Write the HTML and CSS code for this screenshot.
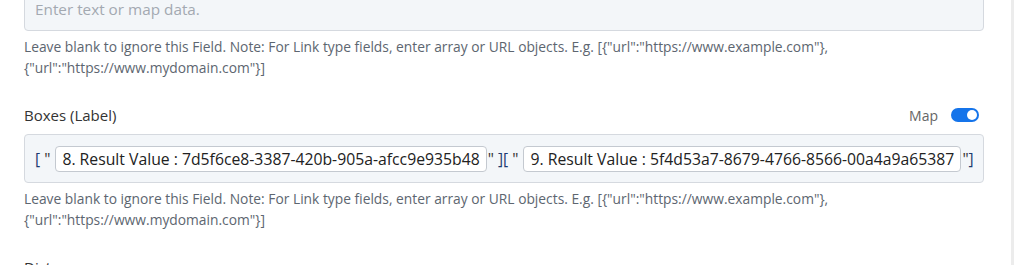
FILE: index.html
```html
<html>
<head>
    <meta charset="UTF-8">
    <title>Boxes</title>
    <link rel="stylesheet" href="styles.css">
</head>
<body>
    <div class="pantalla">
        <div id="formulario">
            <div class="campo">
                <div class="caja vacia">Enter text or map data.</div>
                <p class="ayuda">Leave blank to ignore this Field. Note: For Link type fields, enter array or URL objects. E.g. [{"url":"https://www.example.com"},<br>{"url":"https://www.mydomain.com"}]</p>
            </div>

            <div class="campo">
                <div class="cabecera">
                    <label class="etiqueta">Boxes (Label)</label>
                    <div class="mapa">
                        <span>Map</span>
                        <span class="interruptor"><span class="bola"></span></span>
                    </div>
                </div>
                <div class="caja fichas">
                    <span class="corchete">[</span><span class="comilla">&nbsp;"</span>
                    <span class="ficha">8. Result Value : 7d5f6ce8-3387-420b-905a-afcc9e935b48</span>
                    <span class="comilla">"&nbsp;</span><span class="corchete">][</span><span class="comilla">&nbsp;"</span>
                    <span class="ficha">9. Result Value : 5f4d53a7-8679-4766-8566-00a4a9a65387</span>
                    <span class="comilla">"</span><span class="corchete">]</span>
                </div>
                <p class="ayuda">Leave blank to ignore this Field. Note: For Link type fields, enter array or URL objects. E.g. [{"url":"https://www.example.com"},<br>{"url":"https://www.mydomain.com"}]</p>
            </div>

            <div class="campo">
                <div class="cabecera">
                    <label class="etiqueta">Distance</label>
                </div>
            </div>
        </div>
        <div class="barra"></div>
    </div>
</body>
</html>
```

FILE: styles.css
```css
body {
    margin: 0;
    font-family: "Open Sans", sans-serif;
    color: #333;
    background-color: white;
}

.pantalla {
    display: flex;
    height: 265px;
    overflow: hidden;
}

#formulario {
    flex: 1;
    margin-top: -13px;
    padding: 0 27px 0 24px;
}

.barra {
    width: 3px;
    background-color: #ececec;
}

.campo + .campo { margin-top: 26px; }

.caja {
    border: 1px solid #d5d9df;
    border-radius: 4px;
    background-color: #f3f6f9;
}

.vacia {
    padding: 11px 10px;
    font-size: 15.3px;
    line-height: 20px;
    color: #a3a9b1;
}

.ayuda {
    margin: 5px 0 0 0;
    font-size: 13.8px;
    line-height: 21px;
    color: #5d6670;
}

.cabecera {
    display: flex;
    align-items: center;
    justify-content: space-between;
    height: 22px;
    padding-right: 5px;
    margin-bottom: 8px;
}

.etiqueta {
    font-size: 15px;
    line-height: 22px;
    color: #333;
}

.mapa {
    display: flex;
    align-items: center;
    gap: 13px;
    font-size: 14px;
    color: #666;
}

.interruptor {
    display: flex;
    justify-content: flex-end;
    align-items: center;
    width: 24px;
    height: 14px;
    padding: 0 2px;
    border-radius: 7px;
    background-color: #1574ea;
}

.bola {
    width: 10px;
    height: 10px;
    border-radius: 50%;
    background-color: white;
}

.fichas {
    display: flex;
    align-items: center;
    padding: 11px 4px 10px 10px;
    font-size: 15.6px;
    white-space: nowrap;
}

.fichas > span { flex: none; }

.corchete { color: #1d3b70; }

.comilla { color: #333; }

.ficha {
    margin: 0 1px 0 5px;
    padding: 0 6px;
    border: 1px solid #c4c9d0;
    border-radius: 4px;
    background-color: white;
    font-size: 15.75px;
    line-height: 24px;
    color: #222;
}
```
